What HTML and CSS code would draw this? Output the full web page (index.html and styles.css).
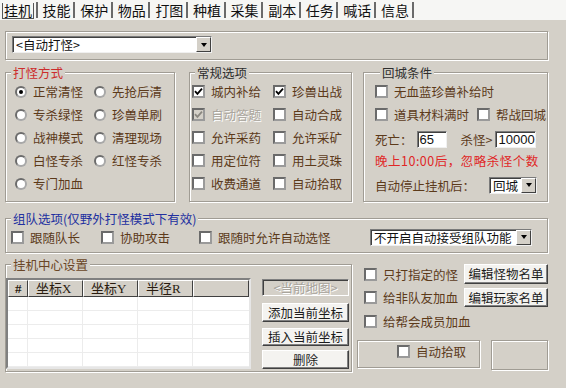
FILE: index.html
```html
<!DOCTYPE html>
<html lang="zh-CN">
<head>
    <meta charset="UTF-8">
    <meta name="viewport" content="width=device-width, initial-scale=1.0">
    <title>挂机</title>
    <link rel="stylesheet" href="styles.css">
</head>
<body>
<div class="window">

    <div class="tabs">
        <span class="tab active"><span class="tab-focus">挂机</span></span>
        <span class="tab">技能</span>
        <span class="tab">保护</span>
        <span class="tab">物品</span>
        <span class="tab">打图</span>
        <span class="tab">种植</span>
        <span class="tab">采集</span>
        <span class="tab">副本</span>
        <span class="tab">任务</span>
        <span class="tab">喊话</span>
        <span class="tab">信息</span>
    </div>

    <div class="panel">

        <div class="frame top-frame">
            <div class="combo combo-mode">
                <span class="combo-text">&lt;自动打怪&gt;</span>
                <span class="combo-btn"><i class="arrow"></i></span>
            </div>
        </div>

        <div class="group-row">
            <div class="group g-mode">
                <div class="group-title t-red">打怪方式</div>
                <div class="opt-grid mode-grid">
                    <span class="opt"><span class="radio on"></span>正常清怪</span>
                    <span class="opt"><span class="radio"></span>先抢后清</span>
                    <span class="opt"><span class="radio"></span>专杀绿怪</span>
                    <span class="opt"><span class="radio"></span>珍兽单刷</span>
                    <span class="opt"><span class="radio"></span>战神模式</span>
                    <span class="opt"><span class="radio"></span>清理现场</span>
                    <span class="opt"><span class="radio"></span>白怪专杀</span>
                    <span class="opt"><span class="radio"></span>红怪专杀</span>
                    <span class="opt"><span class="radio"></span>专门加血</span>
                </div>
            </div>

            <div class="group g-common">
                <div class="group-title t-dark">常规选项</div>
                <div class="opt-grid common-grid">
                    <span class="opt"><span class="check"><svg viewBox="0 0 9 9"><polyline points="1,4.2 3.4,6.8 8,1.6"/></svg></span>城内补给</span>
                    <span class="opt"><span class="check"><svg viewBox="0 0 9 9"><polyline points="1,4.2 3.4,6.8 8,1.6"/></svg></span>珍兽出战</span>
                    <span class="opt disabled"><span class="check"><svg viewBox="0 0 9 9"><polyline points="1,4.2 3.4,6.8 8,1.6"/></svg></span>自动答题</span>
                    <span class="opt"><span class="check"></span>自动合成</span>
                    <span class="opt"><span class="check"></span>允许采药</span>
                    <span class="opt"><span class="check"></span>允许采矿</span>
                    <span class="opt"><span class="check"></span>用定位符</span>
                    <span class="opt"><span class="check"></span>用土灵珠</span>
                    <span class="opt"><span class="check"></span>收费通道</span>
                    <span class="opt"><span class="check"></span>自动拾取</span>
                </div>
            </div>

            <div class="group g-return">
                <div class="group-title t-dark">回城条件</div>
                <div class="ret-row r1">
                    <span class="opt"><span class="check"></span>无血蓝珍兽补给时</span>
                </div>
                <div class="ret-row r2">
                    <span class="opt opt-full"><span class="check"></span>道具材料满时</span>
                    <span class="opt"><span class="check"></span>帮战回城</span>
                </div>
                <div class="ret-row r3">
                    <span class="field-label">死亡：</span>
                    <span class="input in-death">65</span>
                    <span class="field-label kill-label">杀怪&gt;</span>
                    <span class="input in-kill">10000</span>
                </div>
                <div class="ret-row r4 night-note">晚上10:00后，忽略杀怪个数</div>
                <div class="ret-row r5">
                    <span class="field-label">自动停止挂机后：</span>
                    <div class="combo combo-after">
                        <span class="combo-text">回城</span>
                        <span class="combo-btn"><i class="arrow"></i></span>
                    </div>
                </div>
            </div>
        </div>

        <div class="group g-team">
            <div class="group-title t-blue">组队选项(仅野外打怪模式下有效)</div>
            <div class="team-row">
                <span class="opt team-1"><span class="check"></span>跟随队长</span>
                <span class="opt team-2"><span class="check"></span>协助攻击</span>
                <span class="opt"><span class="check"></span>跟随时允许自动选怪</span>
                <div class="combo combo-team">
                    <span class="combo-text">不开启自动接受组队功能</span>
                    <span class="combo-btn"><i class="arrow"></i></span>
                </div>
            </div>
        </div>

        <div class="bottom-row">
            <div class="group g-center">
                <div class="group-title t-brown">挂机中心设置</div>
                <div class="center-body">
                    <div class="list">
                        <div class="list-head">
                            <span class="col c-no">#</span>
                            <span class="col c-x">坐标X</span>
                            <span class="col c-y">坐标Y</span>
                            <span class="col c-r">半径R</span>
                            <span class="col c-rest"></span>
                        </div>
                        <div class="list-body">
                            <span class="lcol c-no"></span>
                            <span class="lcol c-x"></span>
                            <span class="lcol c-y"></span>
                            <span class="lcol c-r"></span>
                        </div>
                    </div>
                    <div class="btn-col">
                        <span class="map-field">&lt;当前地图&gt;</span>
                        <span class="btn b-add">添加当前坐标</span>
                        <span class="btn b-insert">插入当前坐标</span>
                        <span class="btn b-del">删除</span>
                    </div>
                </div>
            </div>

            <div class="side">
                <div class="side-row s1">
                    <span class="opt"><span class="check"></span>只打指定的怪</span>
                    <span class="btn side-btn">编辑怪物名单</span>
                </div>
                <div class="side-row s2">
                    <span class="opt"><span class="check"></span>给非队友加血</span>
                    <span class="btn side-btn">编辑玩家名单</span>
                </div>
                <div class="side-row s3">
                    <span class="opt"><span class="check"></span>给帮会成员加血</span>
                </div>
                <div class="side-boxes">
                    <div class="frame box-pick">
                        <span class="opt"><span class="check"></span>自动拾取</span>
                    </div>
                    <div class="frame box-empty"></div>
                </div>
            </div>
        </div>

    </div>
</div>
</body>
</html>
```

FILE: styles.css
```css
body {
    margin: 0;
    background-color: #d4d0c8;
    font-family: "Noto Sans CJK SC", sans-serif;
    font-size: 12.5px;
    color: #5c3a1a;
}

.window {
    width: 566px;
    height: 388px;
    overflow: hidden;
}

/* tab strip */
.tabs {
    display: flex;
    height: 20px;
    background-color: #f6f6f4;
}

.tab {
    box-sizing: border-box;
    width: 37.6px;
    height: 16px;
    margin-top: 2px;
    padding-left: 5px;
    font-size: 14px;
    line-height: 16px;
    color: #111;
    white-space: nowrap;
    border-right: 2px solid #6a6a6a;
}

.tab.active {
    padding-left: 2px;
}

.tab-focus {
    display: inline-block;
    padding: 0 1px;
    border: 1px solid #555;
    border-top: none;
    line-height: 15px;
}

.panel {
    padding: 0 18px 0 5px;
}

/* etched frames */
.frame,
.group {
    box-sizing: border-box;
    border: 1px solid #a09c94;
    box-shadow: inset 1px 1px 0 #fff, 1px 1px 0 #fff;
}

.top-frame {
    margin-top: 11px;
    height: 29px;
    padding: 4px 0 0 6px;
}

.group-title {
    width: max-content;
    height: 15px;
    margin: -8px 0 0 5px;
    padding: 0 2px;
    line-height: 15px;
    background-color: #d4d0c8;
}

.t-red { color: #cc2c2c; }
.t-dark { color: #2e2e2e; }
.t-blue { color: #2330a0; }
.t-brown { color: #6a4626; }

/* combo boxes */
.combo {
    box-sizing: border-box;
    display: flex;
    height: 17px;
    background-color: #fff;
    border: 1px solid;
    border-color: #7a7a7a #f0f0f0 #f0f0f0 #7a7a7a;
    box-shadow: inset 1px 1px 0 #404040;
    color: #111;
}

.combo-text {
    flex: 1;
    padding-left: 3px;
    line-height: 15px;
    white-space: nowrap;
}

.combo-btn {
    box-sizing: border-box;
    width: 15px;
    height: 15px;
    flex: none;
    display: flex;
    align-items: center;
    justify-content: center;
    background-color: #d4d0c8;
    border: 1px solid;
    border-color: #fff #404040 #404040 #fff;
}

.arrow {
    width: 0;
    height: 0;
    border-left: 3.5px solid transparent;
    border-right: 3.5px solid transparent;
    border-top: 4px solid #000;
}

.combo-mode {
    width: 200px;
}

/* options */
.opt {
    display: flex;
    align-items: center;
    gap: 6px;
    white-space: nowrap;
}

.radio {
    box-sizing: border-box;
    width: 12px;
    height: 12px;
    border-radius: 50%;
    border: 2px solid #6c6c6c;
    border-right-color: #a8a8a8;
    border-bottom-color: #a8a8a8;
    background-color: #fff;
    display: flex;
    align-items: center;
    justify-content: center;
}

.radio.on::after {
    content: "";
    width: 4px;
    height: 4px;
    border-radius: 50%;
    background-color: #000;
}

.check {
    box-sizing: border-box;
    width: 13px;
    height: 13px;
    flex: none;
    border: 2px solid #6a6a6a;
    border-right-color: #9a9a9a;
    border-bottom-color: #9a9a9a;
    background-color: #fff;
    display: flex;
    align-items: center;
    justify-content: center;
}

.check svg {
    width: 9px;
    height: 9px;
    fill: none;
    stroke: #000;
    stroke-width: 1.8;
}

.disabled {
    color: #aaa69e;
    text-shadow: 1px 1px 0 #fff;
}

.disabled .check {
    background-color: #d4d0c8;
}

.disabled .check svg {
    stroke: #8a8780;
}

/* top row of groups */
.group-row {
    display: flex;
    margin-top: 12px;
}

.group-row .group {
    height: 130px;
}

.g-mode {
    width: 170px;
}

.g-common {
    width: 163px;
    margin-left: 14px;
}

.g-return {
    width: 185px;
    margin-left: 11px;
    padding-left: 11px;
}

.opt-grid {
    display: grid;
    grid-auto-rows: 23px;
}

.mode-grid {
    grid-template-columns: 79px 1fr;
    padding-left: 9px;
}

.common-grid {
    grid-template-columns: 81px 1fr;
    padding-left: 2px;
}

.ret-row {
    display: flex;
    align-items: center;
}

.r1, .r2 {
    height: 23px;
}

.opt-full {
    width: 102px;
}

.r3 {
    height: 26px;
}

.field-label {
    white-space: nowrap;
}

.input {
    box-sizing: border-box;
    height: 17px;
    padding-left: 2px;
    line-height: 15px;
    background-color: #fff;
    border: 1px solid;
    border-color: #7a7a7a #f0f0f0 #f0f0f0 #7a7a7a;
    box-shadow: inset 1px 1px 0 #404040;
    color: #111;
    font-family: "Liberation Sans", sans-serif;
    font-size: 13px;
}

.in-death {
    width: 30px;
    margin-left: 4px;
}

.kill-label {
    margin-left: 14px;
}

.in-kill {
    width: 41px;
    margin-left: 3px;
}

.night-note {
    height: 17px;
    color: #e02626;
    letter-spacing: 0.5px;
    white-space: nowrap;
}

.r5 {
    height: 24px;
    margin-top: 4px;
}

.combo-after {
    width: 48px;
    margin-left: 14px;
}

/* team group */
.g-team {
    height: 35px;
    margin-top: 16px;
}

.team-row {
    display: flex;
    align-items: center;
    height: 22px;
    padding-left: 5px;
}

.team-1 {
    width: 90px;
}

.team-2 {
    width: 98px;
}

.combo-team {
    width: 162px;
    margin-left: auto;
    margin-right: 15px;
}

/* bottom area */
.bottom-row {
    display: flex;
    margin-top: 11px;
}

.g-center {
    width: 347px;
    height: 108px;
}

.center-body {
    display: flex;
}

.list {
    box-sizing: border-box;
    width: 245px;
    height: 91px;
    margin-top: 6px;
    border: 2px solid;
    border-color: #808080 #e6e6e6 #e6e6e6 #808080;
    background-color: #fff;
    display: flex;
    flex-direction: column;
}

.list-head {
    display: flex;
    height: 17px;
}

.col {
    box-sizing: border-box;
    height: 17px;
    padding-left: 7px;
    line-height: 15px;
    background-color: #d4d0c8;
    border: 1px solid;
    border-color: #fff #404040 #404040 #fff;
    color: #2a1c10;
    font-family: "Liberation Serif", "Noto Sans CJK SC", serif;
    font-size: 13px;
}

.c-no {
    width: 20px;
}

.col.c-no {
    padding-left: 6px;
    font-weight: bold;
}

.c-x, .c-y, .c-r {
    width: 55px;
}

.c-rest {
    flex: 1;
}

.list-body {
    flex: 1;
    display: flex;
    background-image: repeating-linear-gradient(to bottom, transparent 0 13px, #ececec 13px 14px);
}

.lcol {
    box-sizing: border-box;
    border-right: 1px solid #ececec;
}

.btn-col {
    display: flex;
    flex-direction: column;
    width: 87px;
    margin-left: 11px;
}

.map-field {
    box-sizing: border-box;
    height: 17px;
    margin-top: 7px;
    border: 1px solid;
    border-color: #808080 #fff #fff #808080;
    box-shadow: inset 1px 1px 0 #404040;
    text-align: center;
    line-height: 15px;
    color: #a8a49c;
    text-shadow: 1px 1px 0 #fff;
}

.btn {
    box-sizing: border-box;
    height: 19px;
    background-color: #f4f3f0;
    border: 1px solid;
    border-color: #fff #404040 #404040 #fff;
    box-shadow: inset -1px -1px 0 #808080;
    text-align: center;
    line-height: 17px;
    color: #1c1c1c;
    white-space: nowrap;
}

.b-add {
    margin-top: 7px;
}

.b-insert {
    height: 18px;
    margin-top: 6px;
    line-height: 16px;
}

.b-del {
    margin-top: 4px;
}

.side {
    width: 191px;
    margin-left: 5px;
}

.side-row {
    display: flex;
    align-items: center;
    padding-left: 7px;
}

.s1 {
    height: 20px;
}

.s2 {
    height: 19px;
    margin-top: 4px;
}

.s3 {
    height: 20px;
    margin-top: 4px;
}

.side-btn {
    width: 84px;
    height: 20px;
    margin-left: auto;
    line-height: 18px;
}

.s2 .side-btn {
    height: 19px;
    line-height: 17px;
}

.side-boxes {
    display: flex;
    margin-top: 9px;
}

.box-pick {
    width: 123px;
    height: 28px;
    padding: 1px 0 0 39px;
}

.box-empty {
    width: 57px;
    height: 30px;
    margin-left: 11px;
}
```
